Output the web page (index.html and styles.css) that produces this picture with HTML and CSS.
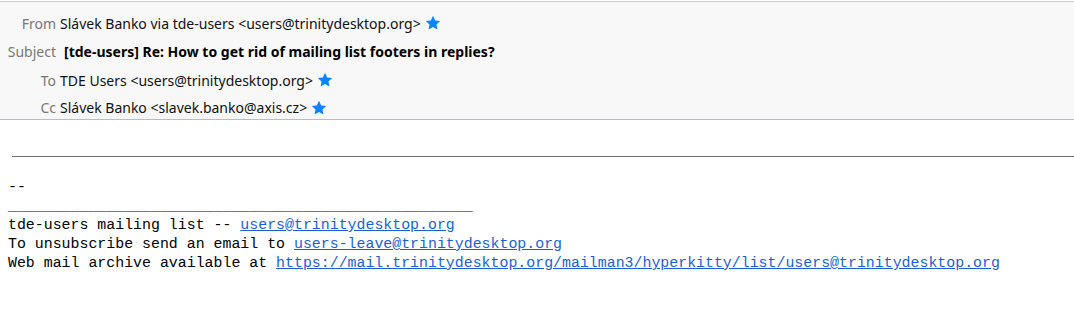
FILE: index.html
```html
<!DOCTYPE html>
<html>
<head>
<meta charset="utf-8">
<link rel="stylesheet" href="styles.css">
</head>
<body>
<div class="header">
  <div class="row">
    <span class="label">From</span>
    <span class="value">Slávek Banko via tde-users &lt;users@trinitydesktop.org&gt; <svg class="star" viewBox="0 0 16 16"><path d="M8 0.8l2.2 4.6 5 .6-3.7 3.5.9 5-4.4-2.4-4.4 2.4.9-5L.8 6l5-.6z"/></svg></span>
  </div>
  <div class="row">
    <span class="label">Subject</span>
    <span class="value subject">[tde-users] Re: How to get rid of mailing list footers in replies?</span>
  </div>
  <div class="row">
    <span class="label">To</span>
    <span class="value">TDE Users &lt;users@trinitydesktop.org&gt; <svg class="star" viewBox="0 0 16 16"><path d="M8 0.8l2.2 4.6 5 .6-3.7 3.5.9 5-4.4-2.4-4.4 2.4.9-5L.8 6l5-.6z"/></svg></span>
  </div>
  <div class="row last">
    <span class="label">Cc</span>
    <span class="value">Slávek Banko &lt;slavek.banko@axis.cz&gt; <svg class="star" viewBox="0 0 16 16"><path d="M8 0.8l2.2 4.6 5 .6-3.7 3.5.9 5-4.4-2.4-4.4 2.4.9-5L.8 6l5-.6z"/></svg></span>
  </div>
</div>
<div class="body">
  <div class="rule"></div>
<pre class="footer">-- 
____________________________________________________
tde-users mailing list -- <a href="#">users@trinitydesktop.org</a>
To unsubscribe send an email to <a href="#">users-leave@trinitydesktop.org</a>
Web mail archive available at <a href="#">https://mail.trinitydesktop.org/mailman3/hyperkitty/list/users@trinitydesktop.org</a></pre>
</div>
</body>
</html>
```

FILE: styles.css
```css
html, body {
  margin: 0;
  padding: 0;
  background: #fff;
  overflow: hidden;
}
.header {
  margin-top: 1px;
  border-top: 1px solid #cfcfcf;
  border-bottom: 1px solid #b9bcc4;
  background: #f8f8f8;
  padding-top: 7px;
  height: 110px;
  font-family: "Noto Sans", sans-serif;
  font-size: 14px;
  color: #111;
}
.row {
  display: grid;
  grid-template-columns: 56px auto;
  column-gap: 4px;
  align-items: center;
  height: 28.5px;
}
.row.last {
  height: 26px;
}
.label {
  text-align: right;
  color: #777;
}
.value {
  display: flex;
  align-items: center;
  gap: 4px;
  white-space: nowrap;
}
.subject {
  font-weight: bold;
  margin-left: 4px;
  color: #000;
}
.star {
  width: 16px;
  height: 16px;
  fill: #0a84ff;
}
.body {
  padding-top: 36px;
}
.rule {
  margin-left: 12px;
  border-top: 1px solid #6e6e6e;
}
.footer {
  margin: 21px 0 0 8px;
  font-family: "Liberation Mono", monospace;
  font-size: 14.9px;
  line-height: 19px;
  color: #000;
}
.footer a {
  color: #1a5fd6;
  text-decoration: underline;
}
```
